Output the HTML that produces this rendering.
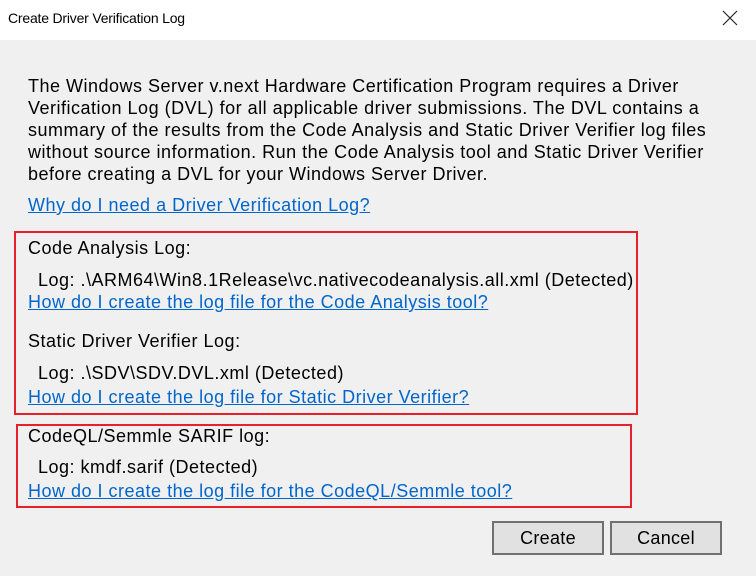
<!DOCTYPE html>
<html><head><style>
body{margin:0;width:756px;height:576px;background:#f0f0f0;position:relative;overflow:hidden;font-family:"Liberation Sans",sans-serif;color:#000}
.t{position:absolute;white-space:nowrap;font-size:18px;line-height:22px;letter-spacing:0.5px}
.l{color:#0066cc;text-decoration:underline}
.box{position:absolute;border:2px solid #e8202a}
.btn{position:absolute;background:#e1e1e1;border:2px solid #707070;box-sizing:border-box;font-size:18px;text-align:center;line-height:30px;letter-spacing:0.3px}
</style></head><body>
<div style="position:absolute;left:0;top:0;width:756px;height:40px;background:#fff"></div>
<div class="t" style="left:8px;top:7px;font-size:14px;letter-spacing:-0.2px">Create Driver Verification Log</div>
<svg style="position:absolute;left:722px;top:10px" width="16" height="16"><path d="M1 1L15 15M15 1L1 15" stroke="#222" stroke-width="1.2"/></svg>
<div class="t" style="left:28px;top:75px">The Windows Server v.next Hardware Certification Program requires a Driver</div>
<div class="t" style="left:28px;top:97px">Verification Log (DVL) for all applicable driver submissions. The DVL contains a</div>
<div class="t" style="left:28px;top:119px">summary of the results from the Code Analysis and Static Driver Verifier log files</div>
<div class="t" style="left:28px;top:141px">without source information. Run the Code Analysis tool and Static Driver Verifier</div>
<div class="t" style="left:28px;top:163px">before creating a DVL for your Windows Server Driver.</div>
<div class="t l" style="left:28px;top:194px">Why do I need a Driver Verification Log?</div>
<div class="box" style="left:14px;top:231px;width:620px;height:180px"></div>
<div class="t" style="left:28px;top:237px">Code Analysis Log:</div>
<div class="t" style="left:38px;top:269px">Log: .\ARM64\Win8.1Release\vc.nativecodeanalysis.all.xml (Detected)</div>
<div class="t l" style="left:28px;top:291px">How do I create the log file for the Code Analysis tool?</div>
<div class="t" style="left:28px;top:330px">Static Driver Verifier Log:</div>
<div class="t" style="left:38px;top:362px">Log: .\SDV\SDV.DVL.xml (Detected)</div>
<div class="t l" style="left:28px;top:386px">How do I create the log file for Static Driver Verifier?</div>
<div class="box" style="left:16px;top:424px;width:612px;height:80px"></div>
<div class="t" style="left:28px;top:425px">CodeQL/Semmle SARIF log:</div>
<div class="t" style="left:38px;top:456px">Log: kmdf.sarif (Detected)</div>
<div class="t l" style="left:28px;top:480px">How do I create the log file for the CodeQL/Semmle tool?</div>
<div class="btn" style="left:492px;top:521px;width:112px;height:34px">Create</div>
<div class="btn" style="left:610px;top:521px;width:112px;height:34px">Cancel</div>
</body></html>
